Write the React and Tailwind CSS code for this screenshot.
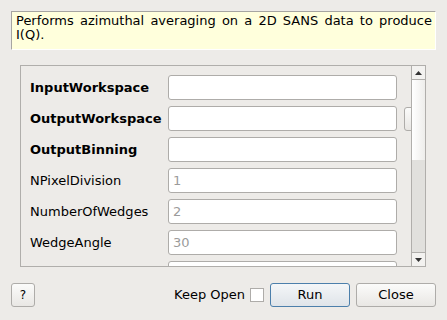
import React from "react";

const rows = [
  { label: "InputWorkspace", bold: true, ph: "" },
  { label: "OutputWorkspace", bold: true, ph: "", btn: true },
  { label: "OutputBinning", bold: true, ph: "" },
  { label: "NPixelDivision", bold: false, ph: "1" },
  { label: "NumberOfWedges", bold: false, ph: "2" },
  { label: "WedgeAngle", bold: false, ph: "30" },
  { label: "", bold: false, ph: "" },
];

export default function App() {
  return (
    <div
      className="w-[447px] h-[320px] bg-[#edebe8] relative overflow-hidden text-[13px] text-black"
      style={{ fontFamily: '"DejaVu Sans", Verdana, sans-serif' }}
    >
      <div className="pt-[11px] px-[11px]">
        <div className="h-[39px] bg-[#ffffdc] border-t border-l border-[#a6a5a2] border-r border-r-white border-b border-b-white pl-[4px] pr-[3px] pt-[2px] leading-[14px] text-justify">
          Performs azimuthal averaging on a 2D SANS data to produce I(Q).
        </div>
      </div>
      <div className="ml-[20px] mt-[15px] w-[406px] h-[202px] border border-[#b0aeab] flex">
        <div className="flex-1 overflow-hidden">
          <div className="pl-[9px] pt-[9px] flex flex-col gap-[6px] w-[420px]">
            {rows.map((r, i) => (
              <div key={i} className="flex items-center h-[25px] shrink-0">
                <div className={`w-[138px] shrink-0 ${r.bold ? "font-bold" : ""}`}>{r.label}</div>
                <div className="w-[229px] h-[25px] shrink-0 bg-white border border-[#aeaca9] rounded-[3px] px-[4px] flex items-center text-[#9b9b9b]">
                  {r.ph}
                </div>
                {r.btn && (
                  <div className="ml-[7px] w-[20px] h-[24px] shrink-0 border border-[#aeaca9] rounded-[3px] bg-gradient-to-b from-[#fbfbfa] to-[#e8e6e3]" />
                )}
              </div>
            ))}
          </div>
        </div>
        <div className="w-[14px] border-l border-[#b0aeab] flex flex-col shrink-0">
          <div className="h-[14px] border-b border-[#b0aeab] bg-[#f3f2f0] flex items-center justify-center">
            <svg width="7" height="4" viewBox="0 0 7 4"><path d="M0 4 L3.5 0 L7 4 Z" fill="#333" /></svg>
          </div>
          <div className="h-[80px] bg-gradient-to-r from-[#ffffff] to-[#eeedeb]" />
          <div className="flex-1 bg-[#e1e0dd]" />
          <div className="h-[14px] border-t border-[#b0aeab] bg-[#f3f2f0] flex items-center justify-center">
            <svg width="7" height="4" viewBox="0 0 7 4"><path d="M0 0 L7 0 L3.5 4 Z" fill="#333" /></svg>
          </div>
        </div>
      </div>
      <div className="mt-[16px] px-[11px] flex items-center h-[24px]">
        <div className="w-[24px] h-[24px] border border-[#aeaca9] rounded-[3px] bg-gradient-to-b from-[#fbfbfa] to-[#e9e7e4] flex items-center justify-center text-[12px]">
          ?
        </div>
        <div className="flex-1" />
        <div className="mr-[5px]">Keep Open</div>
        <div className="w-[14px] h-[14px] bg-white border border-[#aeaca9] mr-[6px]" />
        <div className="w-[80px] h-[24px] border border-[#4c7fab] rounded-[3px] bg-gradient-to-b from-[#f4f6f8] to-[#dfe4e9] flex items-center justify-center">
          Run
        </div>
        <div className="ml-[6px] w-[80px] h-[24px] border border-[#aeaca9] rounded-[3px] bg-gradient-to-b from-[#fbfbfa] to-[#e9e7e4] flex items-center justify-center">
          Close
        </div>
      </div>
    </div>
  );
}
